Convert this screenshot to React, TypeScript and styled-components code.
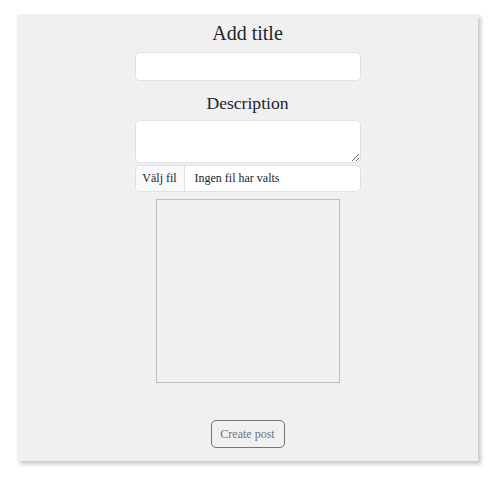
import React from "react";
import styled, { createGlobalStyle } from "styled-components";

const Global = createGlobalStyle`
  html, body { margin: 0; padding: 0; background: #ffffff; }
  body { font-family: "Liberation Serif", "Times New Roman", serif; color: #212529; }
  * { box-sizing: border-box; }
`;

const Page = styled.div`
  padding: 14px 0 18px 17px;
`;

const Card = styled.form`
  width: 461px;
  height: 447px;
  background: #f0f0f0;
  box-shadow: 3px 3px 4px rgba(0, 0, 0, 0.22);
  display: flex;
  flex-direction: column;
  align-items: center;
  padding-top: 7px;
`;

const Heading = styled.label<{ $size: number; $gap: number }>`
  font-size: ${(p) => p.$size}px;
  line-height: 1.2;
  margin-bottom: ${(p) => p.$gap}px;
  color: #212529;
`;

const Field = styled.div`
  width: 226px;
  display: flex;
  flex-direction: column;
  gap: 2px;
`;

const TextInput = styled.input`
  width: 226px;
  height: 29px;
  border: 1px solid #dee2e6;
  border-radius: 5px;
  background: #fff;
  margin-bottom: 12px;
  font: inherit;
  padding: 0 10px;
  outline: none;
`;

const TextArea = styled.textarea`
  width: 226px;
  height: 43px;
  border: 1px solid #dee2e6;
  border-radius: 5px;
  background: #fff;
  font: inherit;
  padding: 4px 10px;
  outline: none;
  display: block;
  margin: 0;
`;

const FilePicker = styled.label`
  width: 226px;
  height: 27px;
  border: 1px solid #dee2e6;
  border-radius: 5px;
  background: #fff;
  display: flex;
  align-items: stretch;
  overflow: hidden;
  font-size: 12px;
  color: #212529;
  cursor: pointer;

  input { display: none; }
`;

const FileButton = styled.span`
  width: 49px;
  background: #f8f9fa;
  border-right: 1px solid #dee2e6;
  display: flex;
  align-items: center;
  justify-content: center;
`;

const FileName = styled.span`
  display: flex;
  align-items: center;
  padding-left: 10px;
`;

const Preview = styled.div`
  width: 184px;
  height: 184px;
  border: 1px solid #bdbdbd;
  margin-top: 7px;
`;

const Submit = styled.button`
  margin-top: 37px;
  width: 74px;
  height: 28px;
  border: 1px solid #6c757d;
  border-radius: 5px;
  background: transparent;
  color: #6c757d;
  font-family: inherit;
  font-size: 12px;
  padding: 0;
  display: flex;
  align-items: center;
  justify-content: center;
`;

export default function App() {
  return (
    <>
      <Global />
      <Page>
        <Card onSubmit={(e) => e.preventDefault()}>
          <Heading $size={20} $gap={7}>Add title</Heading>
          <TextInput type="text" />
          <Heading $size={17.6} $gap={6}>Description</Heading>
          <Field>
            <TextArea />
            <FilePicker>
              <input type="file" />
              <FileButton>Välj fil</FileButton>
              <FileName>Ingen fil har valts</FileName>
            </FilePicker>
          </Field>
          <Preview />
          <Submit type="submit">Create post</Submit>
        </Card>
      </Page>
    </>
  );
}
